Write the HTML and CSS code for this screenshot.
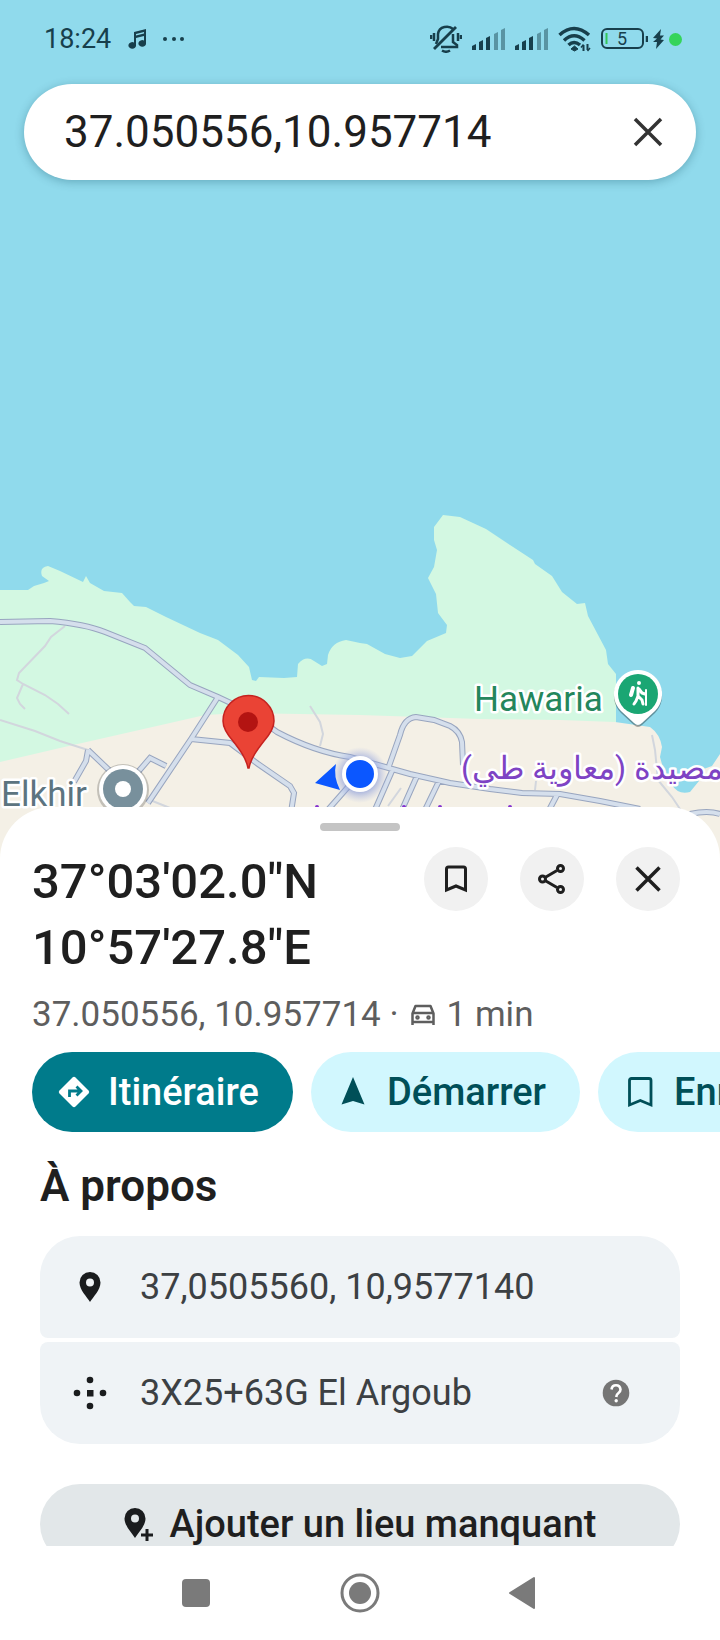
FILE: index.html
```html
<!DOCTYPE html>
<html lang="fr">
<head>
<meta charset="utf-8">
<meta name="viewport" content="width=device-width, initial-scale=1">
<title>37.050556,10.957714</title>
<link rel="stylesheet" href="styles.css">
</head>
<body>
<div class="screen">
  <main class="map">
    <svg class="map-canvas" viewBox="0 0 720 860" preserveAspectRatio="xMidYMin slice" role="img" aria-label="Carte">
      <defs>
        <radialGradient id="halo"><stop offset=".6" stop-color="#7f93d8" stop-opacity=".6"/><stop offset="1" stop-color="#a9b6e6" stop-opacity="0"/></radialGradient>
      </defs>
      <rect class="sea" width="720" height="860"/>
      <path class="park" d="M0 590H28L34 586 44 583 49 581 42 576Q39 567 48 566L60 571 83 582 86 576 90 583 104 591 122 593 130 602 134 606 146 607 166 617 200 633 218 640 238 655 249 667 252 680 256 681 259 677 284 678 297 677 298 664Q306 655 314 661L322 666 327 664 328 655Q332 642 346 640L360 643 367 644 385 654 400 658 412 656 427 641 446 633 447 625 438 613 436 594 428 578 434 567 437 550 434 540 434 527 443 515 460 517 486 529 510 545 533 560 535 564 552 576 562 592 577 604 585 603 588 616 606 650 608 664 616 674 616 790H0Z"/>
      <path class="land" d="M0 762L60 748 170 723 205 715 240 713 360 715 480 719 560 720 615 722 650 727Q660 734 662 747L660 757 663 768 672 785Q678 795 690 792L699 781 698 771 712 766 720 754V860H0Z"/>
      <path class="path" d="M65 626L51 637 45 646 19 673 17 680 23 684 45 695 58 704 69 714M23 684L17 698 20 704 25 709M0 720L35 731 60 741 88 750M310 706L320 722 323 734 320 746M652 735L655 750 658 780 672 797 686 818M401 788L388 806M536 781L535 790M150 800L170 808"/>
      <path class="roads" d="M0 622L50 621Q85 624 105 632L145 648 190 685 218 697 250 712 277 732Q315 752 350 757L378 765 410 774 450 783 490 789 522 793 560 794 600 801 640 809M218 697L191 739 148 803M191 739L230 743 258 764 290 786 294 793 291 812M88 750L86 761 74 782M88 750L110 771M138 772L150 758 166 766M348 787L326 812M389 766L400 735Q404 718 416 717L434 720 450 726Q460 731 462 742L463 765M392 771L374 812M417 776L401 812M439 781L424 812M557 795L548 812M690 814Q708 810 720 814"/>
      <path class="roads-fill" d="M0 622L50 621Q85 624 105 632L145 648 190 685 218 697 250 712 277 732Q315 752 350 757L378 765 410 774 450 783 490 789 522 793 560 794 600 801 640 809M218 697L191 739 148 803M191 739L230 743 258 764 290 786 294 793 291 812M88 750L86 761 74 782M88 750L110 771M138 772L150 758 166 766M348 787L326 812M389 766L400 735Q404 718 416 717L434 720 450 726Q460 731 462 742L463 765M392 771L374 812M417 776L401 812M439 781L424 812M557 795L548 812M690 814Q708 810 720 814"/>
      <g fill="#8430ce"><circle cx="404" cy="807" r="2"/><circle cx="440" cy="807" r="2"/><circle cx="510" cy="807" r="2"/><circle cx="317" cy="807" r="2"/></g>

      <circle cx="123" cy="790" r="26" fill="#0003"/>
      <circle cx="123" cy="789" r="24" fill="#fff"/>
      <circle cx="123" cy="789" r="20" fill="#78909c"/>
      <circle cx="123" cy="789" r="8" fill="#fff"/>
      <text class="label label-grey" x="1" y="806">Elkhir</text>

      <path d="M638 672a24 24 0 0 1 17 41l-13 12q-4 4-8 0l-13-12a24 24 0 0 1 17-41Z" fill="#0005"/>
      <path d="M638 670a24 24 0 0 1 17 41l-13 12q-4 4-8 0l-13-12a24 24 0 0 1 17-41Z" fill="#fff"/>
      <circle cx="638" cy="694" r="20" fill="#1aa673"/>
      <g fill="none" stroke="#fff" stroke-width="3" stroke-linecap="round" stroke-linejoin="round">
        <circle cx="639" cy="683" r="1" stroke-width="2"/>
        <path d="M638 688V696L642 700 643 704M638 696L636 701 634 704M639 689L642 693 645 694"/>
        <path d="M633 688L631 695" stroke-width="4"/>
        <path d="M646 690V705" stroke-width="2"/>
      </g>
      <text class="label label-green" x="474" y="711">Hawaria</text>
      <text class="label label-purple" x="461" y="779" direction="rtl" text-anchor="end">المصيدة (معاوية طي)</text>

      <circle cx="360" cy="775" r="28" fill="url(#halo)"/>
      <path d="M315 783L336 764Q333 776 340 790Z" fill="#0b57ff"/>
      <circle cx="360" cy="774" r="18" fill="#fff"/>
      <circle cx="360" cy="774" r="14" fill="#0b57ff"/>

      <path d="M248 768C246 758 240 750 233 741C226 733 223 727 223 721A25 25 0 0 1 274 721C274 727 271 733 264 741C257 750 251 758 249 768Z" fill="#ea4335" stroke="#c5221f" stroke-width="1.500"/>
      <circle cx="248" cy="722" r="10" fill="#b31412"/>
    </svg>

    <header class="status">
      <span class="time">18:24</span>
      <svg class="note" width="18" height="20" viewBox="0 0 18 20" fill="#173f4c"><path fill-rule="evenodd" d="M6 3L18 0V14A3.800 3.300 0 1 1 16 11.500V7L8 9V16A3.800 3.300 0 1 1 6 13.500ZM8 5V6.500L16 4.500V3Z"/></svg>
      <svg class="dots" width="22" height="20" viewBox="0 0 22 20" fill="#173f4c"><circle cx="2" cy="10" r="2"/><circle cx="11" cy="10" r="2"/><circle cx="19" cy="10" r="2"/></svg>
      <div class="indicators">
        <svg width="32" height="28" viewBox="0 0 32 28" fill="none" stroke="#173f4c" stroke-width="2.500"><path d="M23 4C19 0 9 1 8 9V14L6 19M11 22H27V20L23 17V9"/><path d="M4 24L26 2" stroke-width="2.800"/><path d="M12 25.500Q16 28 20 25.500M1 10V14M4 8V16M28 8V16M31 10V14"/></svg>
        <svg width="33" height="22" viewBox="0 0 33 22" fill="#173f4c"><path d="M0 18L4 16V22H0ZM7 14L11 12V22H7ZM14 10L18 8V22H14Z"/><path d="M22 6L26 4V22H22ZM29 2L33 0V22H29Z" opacity=".45"/></svg>
        <svg width="33" height="22" viewBox="0 0 33 22" fill="#173f4c"><path d="M0 18L4 16V22H0ZM7 14L11 12V22H7ZM14 10L18 8V22H14Z"/><path d="M22 6L26 4V22H22ZM29 2L33 0V22H29Z" opacity=".45"/></svg>
        <svg width="33" height="26" viewBox="0 0 33 26" fill="none" stroke="#173f4c" stroke-width="3.500"><path d="M1.500 9Q16-4 31 9M6 14.500Q16 5 26.500 14.500M10.500 19Q16 14 22 19"/><path d="M16.500 20L20 23 16.500 25 13 23Z" fill="#173f4c" stroke-width="1"/><path d="M25.500 19V25M29.500 18V24" stroke-width="2"/><path d="M23 21.500L25.500 18.500M32 22L29.500 25" stroke-width="1.500"/></svg>
        <span class="battery"><svg width="47" height="22" viewBox="0 0 47 22" fill="none" stroke="#173f4c" stroke-width="2"><rect x="1" y="1" width="41" height="19" rx="5"/><path d="M46 8V14" stroke-width="2.500"/><path d="M5.500 5V16" stroke="#34c759"/></svg><span class="battery-level">5</span></span>
        <svg class="bolt" width="11" height="20" viewBox="0 0 11 20" fill="#173f4c"><path d="M8 0L0 9 4 9.500 0 13 4 13 3 20 11 11 7.500 10.500 11 6.500 7 6.500Z"/></svg>
        <svg class="bolt" width="13" height="13" viewBox="0 0 13 13"><circle cx="6.500" cy="6.500" r="6.500" fill="#35d45b"/></svg>
      </div>
    </header>

    <form class="search">
      <input class="search-input" type="text" aria-label="Rechercher" value="37.050556,10.957714">
      <button class="clear" type="button" aria-label="Effacer"><svg width="30" height="30" viewBox="0 0 30 30" fill="none" stroke="#333" stroke-width="3.500"><path d="M2 2L28 28M28 2L2 28"/></svg></button>
    </form>
  </main>

  <section class="sheet">
    <div class="handle"></div>
    <div class="heading">
      <h1 class="title">37°03'02.0"N 10°57'27.8"E</h1>
      <div class="actions">
        <button class="round" type="button" aria-label="Enregistrer"><svg width="22" height="28" viewBox="0 0 22 28" fill="none" stroke="#1f1f1f" stroke-width="3"><path d="M1.500 25V4Q1.500 2 3.500 2H18.500Q20.500 2 20.500 4V25L11 21Z"/></svg></button>
        <button class="round" type="button" aria-label="Partager"><svg width="28" height="30" viewBox="0 0 28 30" fill="none" stroke="#1f1f1f" stroke-width="3"><path d="M7 13.500L19 6.500M7 16.500L19 23.500"/><circle cx="4.500" cy="15" r="3"/><circle cx="22.500" cy="4.500" r="3"/><circle cx="22.500" cy="25.500" r="3"/></svg></button>
        <button class="round" type="button" aria-label="Fermer"><svg width="26" height="26" viewBox="0 0 26 26" fill="none" stroke="#1f1f1f" stroke-width="3.500"><path d="M1.500 1.500L24.500 24.500M24.500 1.500L1.500 24.500"/></svg></button>
      </div>
    </div>
    <p class="subtitle"><span>37.050556, 10.957714 ·</span>
      <svg width="24" height="22" viewBox="0 0 24 22" fill="none" stroke="#5e5e5e" stroke-width="2.500"><path d="M1.500 21V9.500L4.500 2H19.500L22.500 9.500V21M1.500 9H22.500M1.500 18H22.500" stroke-linejoin="round"/><circle cx="6.500" cy="13.500" r="1" /><circle cx="17.500" cy="13.500" r="1"/></svg>
      <span>1 min</span></p>
    <div class="chips">
      <button class="chip chip-primary" type="button"><svg width="32" height="32" viewBox="0 0 32 32"><path d="M14.500 1.500Q16 0 17.500 1.500L30.500 14.500Q32 16 30.500 17.500L17.500 30.500Q16 32 14.500 30.500L1.500 17.500Q0 16 1.500 14.500Z" fill="#fff"/><path d="M11.500 21V15H21M18.500 10.500L23 15 18.500 19.500" fill="none" stroke="#007b8b" stroke-width="2.800"/></svg>Itinéraire</button>
      <button class="chip" type="button"><svg width="32" height="32" viewBox="0 0 32 32" fill="#004f58"><path d="M16 1L27.500 28.500 16 25 4.500 28.500Z"/></svg>Démarrer</button>
      <button class="chip" type="button"><svg width="32" height="32" viewBox="0 0 32 32" fill="none" stroke="#004f58" stroke-width="2.800"><path d="M5.500 29V4.500Q5.500 2.500 7.500 2.500H25Q27 2.500 27 4.500V29L16.300 24.500Z"/></svg>Enregistrer</button>
    </div>
    <h2 class="about">À propos</h2>
    <ul class="facts">
      <li class="fact"><svg width="36" height="36" viewBox="0 0 36 36"><path fill="#1a1c1e" fill-rule="evenodd" d="M18 3A10.500 10.500 0 0 0 7.500 13.500C7.500 21 15 28 18 33C21 28 28.500 21 28.500 13.500A10.500 10.500 0 0 0 18 3ZM18 9.500A4 4 0 1 1 18 17.500A4 4 0 0 1 18 9.500Z"/></svg><span class="fact-text">37,0505560, 10,9577140</span></li>
      <li class="fact"><svg width="36" height="36" viewBox="0 0 36 36" fill="#1a1c1e"><rect x="15" y="15" width="6.500" height="6.500"/><circle cx="18" cy="5" r="3.300"/><circle cx="18" cy="31" r="3.300"/><circle cx="5" cy="18" r="3.300"/><circle cx="31" cy="18" r="3.300"/></svg><span class="fact-text">3X25+63G El Argoub</span><button class="help" type="button" aria-label="Aide"><svg width="28" height="28" viewBox="0 0 28 28"><circle cx="14" cy="14" r="13.300" fill="#757575"/><path d="M9.500 10.500Q10 6.300 14 6.300T18.500 10.500Q18.500 12.500 16.500 14T14.200 18" fill="none" stroke="#fff" stroke-width="2.600"/><circle cx="14.200" cy="21.800" r="1.700" fill="#fff"/></svg></button></li>
    </ul>
    <button class="add" type="button"><svg width="32" height="36" viewBox="0 0 32 36"><path fill="#1a1c1e" fill-rule="evenodd" d="M12 2A10.500 10.500 0 0 0 1.500 12.500C1.500 20 9 27 12 32C15 27 22.500 20 22.500 12.500A10.500 10.500 0 0 0 12 2ZM12 8.500A4 4 0 1 1 12 16.500A4 4 0 0 1 12 8.500Z"/><path d="M24 23V35M18 29H30" stroke="#e2e7e9" stroke-width="6"/><path d="M24 23V35M18 29H30" stroke="#1a1c1e" stroke-width="3"/></svg>Ajouter un lieu manquant</button>
  </section>

  <nav class="system">
    <button class="key" type="button" aria-label="Applications récentes"><svg width="40" height="40" viewBox="0 0 40 40" fill="#7a7a7a"><rect x="5" y="6" width="28" height="28" rx="4"/></svg></button>
    <button class="key" type="button" aria-label="Accueil"><svg width="40" height="40" viewBox="0 0 40 40" fill="#7a7a7a"><circle cx="20" cy="20" r="18" fill="none" stroke="#7a7a7a" stroke-width="3"/><circle cx="20" cy="20" r="11"/></svg></button>
    <button class="key" type="button" aria-label="Retour"><svg width="40" height="40" viewBox="0 0 40 40" fill="#7a7a7a" stroke="#7a7a7a" stroke-width="2" stroke-linejoin="round"><path d="M7 20L31 5V35Z"/></svg></button>
  </nav>
</div>
</body>
</html>
```

FILE: styles.css
```css
* {
  box-sizing: border-box;
}

body {
  margin: 0;
  font-family: Roboto, "Noto Sans", sans-serif;
  color: #1f1f1f;
}

button {
  margin: 0;
  padding: 0;
  border: 0;
  background: none;
  color: inherit;
  font: inherit;
}

svg {
  display: block;
  flex: none;
}

.screen {
  display: flex;
  flex-direction: column;
  height: 100vh;
  overflow: hidden;
  background: #fff;
}

/* Map */
.map {
  position: relative;
  flex: 12 1 0;
  min-height: 0;
  background: #90daec;
}

.map-canvas {
  position: absolute;
  top: 0;
  left: 0;
  width: 100%;
  height: calc(100% + 53px);
}

.sea {
  fill: #90daec;
}

.park {
  fill: #d3f8e2;
}

.land {
  fill: #f4f0e6;
}

.path {
  fill: none;
  stroke: #d2d6dd;
  stroke-width: 2;
}

.roads {
  fill: none;
  stroke: #98a5bf;
  stroke-width: 6;
}

.roads-fill {
  fill: none;
  stroke: #d5dfec;
  stroke-width: 4;
}

.label {
  font-size: 35px;
  stroke: #fff;
  stroke-width: 5px;
  stroke-linejoin: round;
  paint-order: stroke;
}

.label-grey {
  fill: #5c7480;
}

.label-green {
  fill: #24865c;
}

.label-purple {
  fill: #7e43c4;
  font-size: 32px;
}

/* Status bar */
.status {
  position: relative;
  display: flex;
  align-items: center;
  height: 84px;
  padding: 0 38px 6px 44px;
  color: #173f4c;
}

.time {
  font-size: 27px;
}

.note {
  margin-left: 17px;
}

.dots {
  margin-left: 17px;
}

.indicators {
  display: flex;
  align-items: center;
  gap: 10px;
  margin-left: auto;
}

.battery {
  position: relative;
}

.battery-level {
  position: absolute;
  inset: 0 5px 0 0;
  font-size: 18px;
  line-height: 22px;
  text-align: center;
}

.bolt {
  margin-left: -5px;
}

/* Search */
.search {
  position: relative;
  display: flex;
  align-items: center;
  height: 96px;
  margin: 0 24px;
  padding: 0 33px 0 40px;
  border-radius: 48px;
  background: #fff;
  box-shadow: 0 2px 10px rgba(0, 60, 80, 0.3);
}

.search-input {
  flex: 1;
  min-width: 0;
  padding: 0;
  border: 0;
  outline: 0;
  background: none;
  color: #1f1f1f;
  font: 44px Roboto, "Noto Sans", sans-serif;
}

/* Bottom sheet */
.sheet {
  position: relative;
  display: flex;
  flex-direction: column;
  flex: 11 1 0;
  min-height: 0;
  overflow: hidden;
  border-radius: 52px 52px 0 0;
  background: #fff;
}

.sheet > * {
  flex: none;
}

.handle {
  width: 80px;
  height: 8px;
  margin: 16px auto 0;
  border-radius: 4px;
  background: #c4c4c4;
}

.heading {
  display: flex;
  justify-content: space-between;
  gap: 24px;
  margin: 16px 40px 0 32px;
}

.title {
  max-width: 320px;
  margin: 0;
  padding-top: 2px;
  font-size: 49px;
  font-weight: 500;
  line-height: 66px;
}

.actions {
  display: flex;
  gap: 32px;
}

.round {
  display: grid;
  place-items: center;
  width: 64px;
  height: 64px;
  border-radius: 50%;
  background: #f1f1f1;
}

.subtitle {
  display: flex;
  align-items: center;
  gap: 12px;
  margin: 10px 32px 0;
  color: #5e5e5e;
  font-size: 35px;
  line-height: 48px;
}

.chips {
  display: flex;
  gap: 18px;
  margin-top: 13px;
  padding-left: 32px;
  overflow: hidden;
}

.chip {
  display: flex;
  flex: none;
  align-items: center;
  gap: 18px;
  height: 80px;
  padding: 0 34px 0 26px;
  border-radius: 40px;
  background: #d1f7fe;
  color: #004f58;
  font-size: 38px;
  font-weight: 500;
}

.chip-primary {
  background: #007b8b;
  color: #fff;
}

.about {
  margin: 28px 40px 0;
  font-size: 44px;
  font-weight: 600;
  line-height: 52px;
}

.facts {
  display: flex;
  flex-direction: column;
  gap: 4px;
  margin: 24px 40px 0;
  padding: 0;
  list-style: none;
}

.fact {
  display: flex;
  align-items: center;
  gap: 32px;
  height: 102px;
  padding: 0 50px 0 32px;
  border-radius: 8px;
  background: #eff3f6;
  color: #3c4043;
  font-size: 36px;
}

.fact:first-child {
  border-radius: 40px 40px 8px 8px;
}

.fact:last-child {
  border-radius: 8px 8px 40px 40px;
}

.fact-text {
  flex: 1;
}

.add {
  display: flex;
  align-items: center;
  justify-content: center;
  gap: 14px;
  height: 80px;
  margin: 40px 40px 0;
  border-radius: 40px;
  background: #e2e7e9;
  font-size: 38px;
  font-weight: 500;
}

/* System navigation */
.system {
  display: flex;
  flex: none;
  align-items: center;
  justify-content: center;
  gap: 123px;
  height: 94px;
  background: #fff;
}
```
